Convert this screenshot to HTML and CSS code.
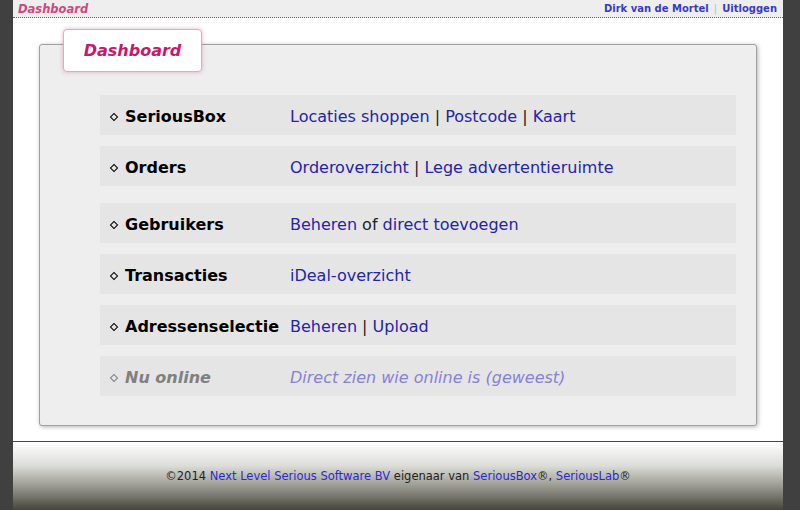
FILE: index.html
```html
<!DOCTYPE html>
<html>
<head>
<meta charset="utf-8">
<link rel="stylesheet" href="styles.css">
</head>
<body>
<div class="page">
  <div class="topbar">
    <span class="crumb">Dashboard</span>
    <span class="user"><a href="#">Dirk van de Mortel</a><span class="sep">|</span><a href="#">Uitloggen</a></span>
  </div>
  <div class="main">
    <div class="panel">
      <div class="tab">Dashboard</div>
      <div class="rows">
        <div class="row">
          <div class="label"><span class="dia"></span>SeriousBox</div>
          <div class="links"><a href="#">Locaties shoppen</a> | <a href="#">Postcode</a> | <a href="#">Kaart</a></div>
        </div>
        <div class="row">
          <div class="label"><span class="dia"></span>Orders</div>
          <div class="links"><a href="#">Orderoverzicht</a> | <a href="#">Lege advertentieruimte</a></div>
        </div>
        <div class="row row-gap">
          <div class="label"><span class="dia"></span>Gebruikers</div>
          <div class="links"><a href="#">Beheren</a> of <a href="#">direct toevoegen</a></div>
        </div>
        <div class="row">
          <div class="label"><span class="dia"></span>Transacties</div>
          <div class="links"><a href="#">iDeal-overzicht</a></div>
        </div>
        <div class="row">
          <div class="label"><span class="dia"></span>Adressenselectie</div>
          <div class="links"><a href="#">Beheren</a> | <a href="#">Upload</a></div>
        </div>
        <div class="row disabled">
          <div class="label"><span class="dia"></span>Nu online</div>
          <div class="links"><a href="#">Direct zien wie online is (geweest)</a></div>
        </div>
      </div>
    </div>
  </div>
  <div class="footer">
    ©2014 <a href="#">Next Level Serious Software BV</a> eigenaar van <a href="#">SeriousBox</a>®, <a href="#">SeriousLab</a>®
  </div>
</div>
</body>
</html>
```
FILE: styles.css
```css
html, body {
  margin: 0;
  padding: 0;
  background: #404040;
  height: 510px;
  overflow: hidden;
}
.page {
  width: 770px;
  margin-left: 13px;
  height: 510px;
  display: flex;
  flex-direction: column;
  font-family: "DejaVu Sans", Verdana, sans-serif;
}
a { text-decoration: none; }
.topbar {
  height: 17px;
  background: #eeeeee;
  border-bottom: 1px dotted #c0307a;
  display: flex;
  justify-content: space-between;
  align-items: center;
  padding: 0 6px 0 5px;
  font-weight: bold;
}
.crumb {
  color: #d2467f;
  font-style: italic;
  font-size: 11.5px;
}
.user { font-size: 10px; }
.user a { color: #3a3ac4; }
.user .sep { color: #bbbbbb; font-weight: normal; margin: 0 5px; }
.main {
  background: #ffffff;
  padding: 26px 26px 15px 26px;
  border-bottom: 1px solid #7a2a4e;
}
.panel {
  position: relative;
  background: #eeeeee;
  border: 1px solid #a0a0a0;
  border-radius: 3px;
  box-shadow: 1px 1px 4px rgba(0,0,0,0.3);
  padding: 50px 20px 29px 60px;
}
.tab {
  position: absolute;
  left: 23px;
  top: -16px;
  width: 137px;
  height: 41px;
  box-sizing: content-box;
  background: #ffffff;
  border: 1px solid #e4a8c6;
  border-radius: 4px;
  box-shadow: 0 0 4px rgba(200, 90, 150, 0.45);
  color: #c8186e;
  font-size: 16px;
  font-weight: bold;
  font-style: italic;
  display: flex;
  align-items: center;
  justify-content: center;
}
.rows {
  display: flex;
  flex-direction: column;
  gap: 11px;
}
.row {
  height: 40px;
  box-sizing: border-box;
  padding-top: 3px;
  background: #e5e5e5;
  display: flex;
  align-items: center;
  font-size: 16px;
}
.row-gap { margin-top: 6px; }
.label {
  width: 190px;
  box-sizing: border-box;
  padding-left: 11px;
  font-weight: bold;
  color: #000000;
  display: flex;
  align-items: center;
}
.dia {
  display: inline-block;
  width: 4px;
  height: 4px;
  border: 1.5px solid #000;
  transform: rotate(45deg);
  margin-right: 8px;
  margin-top: 1px;
}
.links { color: #222222; }
.links a { color: #2424a8; }
.disabled .label { color: #808080; font-style: italic; }
.disabled .dia { border-color: #808080; }
.disabled .links a { color: #8880d8; font-style: italic; }
.footer {
  flex: 1;
  background: linear-gradient(#ffffff 0%, #dcdcd8 35%, #9a9a90 65%, #45453b 100%);
  font-size: 11.5px;
  color: #222222;
  text-align: center;
  padding-top: 27px;
}
.footer a { color: #2a2ad4; }
```
